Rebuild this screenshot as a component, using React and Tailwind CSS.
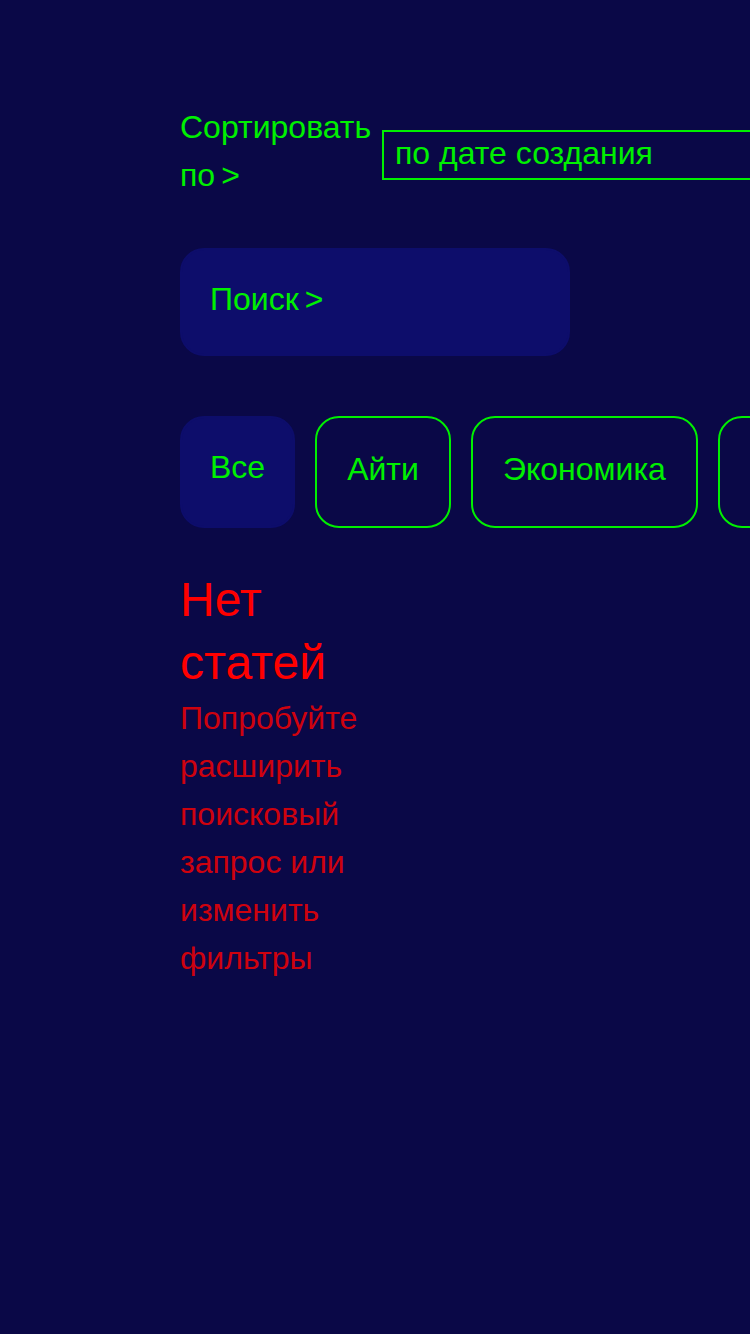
import { useState } from "react";

const categories = ["Все", "Айти", "Экономика", "Наука"];

const App = () => {
  const [sort, setSort] = useState("по дате создания");
  const [active, setActive] = useState("Все");

  return (
    <div
      className="min-h-[1334px] w-[750px] overflow-hidden bg-[#0a0847] pl-[180px] pt-[103px]"
      style={{ fontFamily: '"Liberation Sans", Arial, sans-serif' }}
    >
      <div className="flex items-start gap-[12px]">
        <p className="w-[190px] shrink-0 text-[32px] leading-[48px] text-[#00f000]">
          Сортировать по<span className="ml-[6px]">&gt;</span>
        </p>
        <input
          value={sort}
          onChange={(e) => setSort(e.target.value)}
          className="mt-[27px] h-[50px] w-[420px] shrink-0 border-2 border-[#00f000] bg-transparent px-[11px] pb-[4px] text-[32px] text-[#00f000] outline-none"
        />
      </div>

      <div className="mt-[49px] w-[390px] rounded-[24px] border-2 border-[#0d0d6b] bg-[#0d0d6b] px-[28px] pt-[25px] pb-[31px]">
        <p className="text-[32px] leading-[48px] text-[#00f000]">
          Поиск<span className="ml-[6px]">&gt;</span>
        </p>
      </div>

      <div className="mt-[60px] flex gap-[20px]">
        {categories.map((c) => (
          <button
            key={c}
            onClick={() => setActive(c)}
            className={
              active === c
                ? "shrink-0 rounded-[24px] border-2 border-[#0d0d6b] bg-[#0d0d6b] px-[28px] pt-[25px] pb-[35px] text-[32px] leading-[48px] text-[#00f000]"
                : "shrink-0 rounded-[24px] border-2 border-[#00f000] bg-transparent px-[30px] pt-[27px] pb-[33px] text-[32px] leading-[48px] text-[#00f000]"
            }
          >
            {c}
          </button>
        ))}
      </div>

      <div className="mt-[40px] w-[200px]">
        <h2 className="text-[48px] leading-[63px] text-[#ff0000]">Нет статей</h2>
        <p className="text-[32px] leading-[48px] text-[#ce020e]">
          Попробуйте расширить поисковый запрос или изменить фильтры
        </p>
      </div>
    </div>
  );
};

export default App;
